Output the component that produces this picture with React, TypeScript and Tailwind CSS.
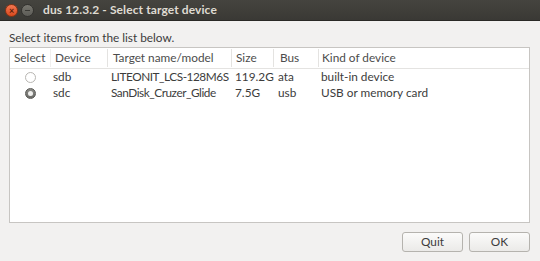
import { useState } from "react";

interface Device {
  name: string;
  model: string;
  size: string;
  bus: string;
  kind: string;
}

const devices: Device[] = [
  { name: "sdb", model: "LITEONIT_LCS-128M6S", size: "119.2G", bus: "ata", kind: "built-in device" },
  { name: "sdc", model: "SanDisk_Cruzer_Glide", size: "7.5G", bus: "usb", kind: "USB or memory card" },
];

const cols = "grid grid-cols-[41px_57px_124px_42px_45px_1fr]";

const Radio = ({ checked }: { checked: boolean }) =>
  checked ? (
    <span className="w-[11px] h-[11px] rounded-full bg-gradient-to-b from-[#8a8a86] to-[#6a6a66] border border-[#5a5a56] flex items-center justify-center">
      <span className="w-[5px] h-[5px] rounded-full bg-[#f0f0ee]" />
    </span>
  ) : (
    <span className="w-[11px] h-[11px] rounded-full bg-white border border-[#b8b6b2]" />
  );

export default function App() {
  const [selected, setSelected] = useState(1);

  return (
    <div className="w-[540px] h-[261px] flex flex-col bg-[#f2f1f0] font-['Lato','Open_Sans',sans-serif] text-[11.8px] text-[#3c3c3c] overflow-hidden whitespace-nowrap">
      {/* title bar */}
      <div className="h-[21px] flex items-center bg-gradient-to-b from-[#45443f] to-[#3a3935] border-b border-[#2a2926]">
        <div className="flex items-center gap-[3px] pl-[5px]">
          <span className="w-[13px] h-[13px] rounded-full bg-gradient-to-b from-[#f37650] to-[#d9491c] border border-[#8a3414] flex items-center justify-center text-[#5a1d08] text-[9px] leading-none font-bold">
            ×
          </span>
          <span className="w-[13px] h-[13px] rounded-full bg-gradient-to-b from-[#77766f] to-[#5c5b56] border border-[#33322f] flex items-center justify-center">
            <span className="w-[5px] h-[1px] bg-[#3a3935]" />
          </span>
        </div>
        <span className="ml-[9px] text-[12px] font-bold text-[#dfdbd2] tracking-[0.1px]">
          dus 12.3.2 - Select target device
        </span>
      </div>

      <div className="flex-1 flex flex-col px-[9px] pr-[10px]">
        <p className="mt-[7px] h-[19px] leading-[19px] text-[#3c3c3c]">
          Select items from the list below.
        </p>

        <div className="h-[176px] bg-white border border-[#c7c5c2]">
          <div className={`${cols} h-[21px] items-center border-b border-[#e4e3e1] text-[#4c4c4c]`}>
            <span className="pl-[4px] border-r border-[#f0efee]">Select</span>
            <span className="pl-[4px] border-r border-[#e4e3e1]">Device</span>
            <span className="pl-[5px] border-r border-[#e4e3e1]">Target name/model</span>
            <span className="pl-[4px] border-r border-[#e4e3e1]">Size</span>
            <span className="pl-[6px] border-r border-[#e4e3e1]">Bus</span>
            <span className="pl-[3px]">Kind of device</span>
          </div>
          {devices.map((d, i) => (
            <div
              key={d.name}
              className={`${cols} h-[16px] items-center leading-[16px]`}
              onClick={() => setSelected(i)}
            >
              <span className="flex justify-center">
                <Radio checked={selected === i} />
              </span>
              <span className="pl-[2px]">{d.name}</span>
              <span className="pl-[3px] tracking-[-0.45px]">{d.model}</span>
              <span className="pl-[3px]">{d.size}</span>
              <span className="pl-[4px]">{d.bus}</span>
              <span className="pl-[2px]">{d.kind}</span>
            </div>
          ))}
        </div>

        <div className="flex justify-end gap-[6px] mt-[9px]">
          <button className="w-[61px] h-[20px] rounded-[3px] border border-[#b5b3ae] bg-gradient-to-b from-[#fbfbfa] to-[#ebeae8] text-[#3c3c3c] leading-none">
            Quit
          </button>
          <button className="w-[61px] h-[20px] rounded-[3px] border border-[#b5b3ae] bg-gradient-to-b from-[#fbfbfa] to-[#ebeae8] text-[#3c3c3c] leading-none">
            OK
          </button>
        </div>
      </div>
    </div>
  );
}
